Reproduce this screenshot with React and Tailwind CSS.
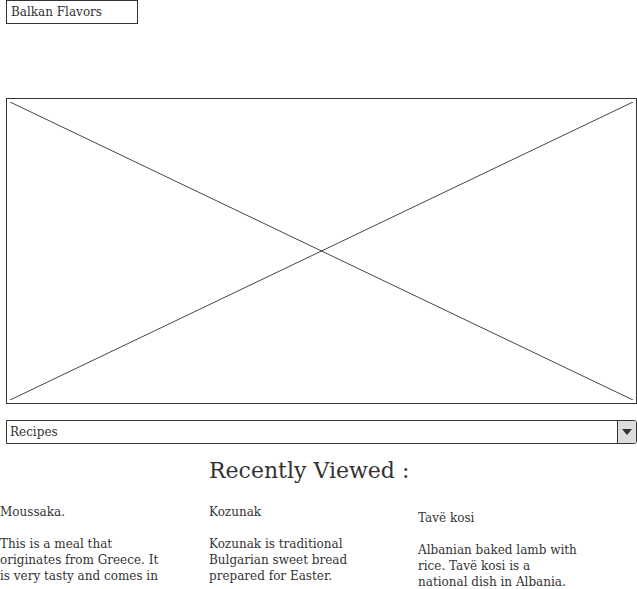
import React from "react";

const font = { fontFamily: '"DejaVu Serif", serif' };

export default function App() {
  return (
    <div className="w-[637px] h-[589px] overflow-hidden bg-white text-[#333] relative" style={font}>
      <div className="pl-[6px]">
        <div className="w-[132px] h-[24px] border border-[#333] pl-[4px] text-[12px] leading-[22px]">Balkan Flavors</div>
      </div>
      <div className="pl-[6px] pt-[74px]">
        <div className="w-[631px] h-[306px] border border-[#333] p-[3px]">
          <svg width="623" height="298" viewBox="0 0 623 298" className="block">
            <line x1="0" y1="0" x2="623" y2="298" stroke="#444" strokeWidth="1" />
            <line x1="623" y1="0" x2="0" y2="298" stroke="#444" strokeWidth="1" />
          </svg>
        </div>
      </div>
      <div className="pl-[6px] pt-[16px]">
        <div className="w-[631px] h-[24px] border border-[#333] rounded-r-[3px] flex">
          <div className="flex-1 pl-[3px] text-[12px] leading-[22px]">Recipes</div>
          <div className="w-[19px] border-l border-[#333] bg-[#ddd] rounded-r-[2px] flex items-center justify-center">
            <svg width="10" height="6" viewBox="0 0 10 6"><polygon points="0,0 10,0 5,6" fill="#333" /></svg>
          </div>
        </div>
      </div>
      <div className="pl-[209px] pt-[12px] text-[22px] leading-[30px]">Recently Viewed :</div>
      <div className="grid grid-cols-[209px_209px_209px] pt-[18px] text-[12px] leading-[16px]">
        <div>
          <div>Moussaka.</div>
          <div className="mt-[16px] w-[165px]">This is a meal that originates from Greece. It is very tasty and comes in</div>
        </div>
        <div>
          <div>Kozunak</div>
          <div className="mt-[16px] w-[165px]">Kozunak is traditional Bulgarian sweet bread prepared for Easter.</div>
        </div>
        <div className="pt-[6px]">
          <div>Tavë kosi</div>
          <div className="mt-[16px] w-[162px]">Albanian baked lamb with rice. Tavë kosi is a national dish in Albania.</div>
        </div>
      </div>
    </div>
  );
}
